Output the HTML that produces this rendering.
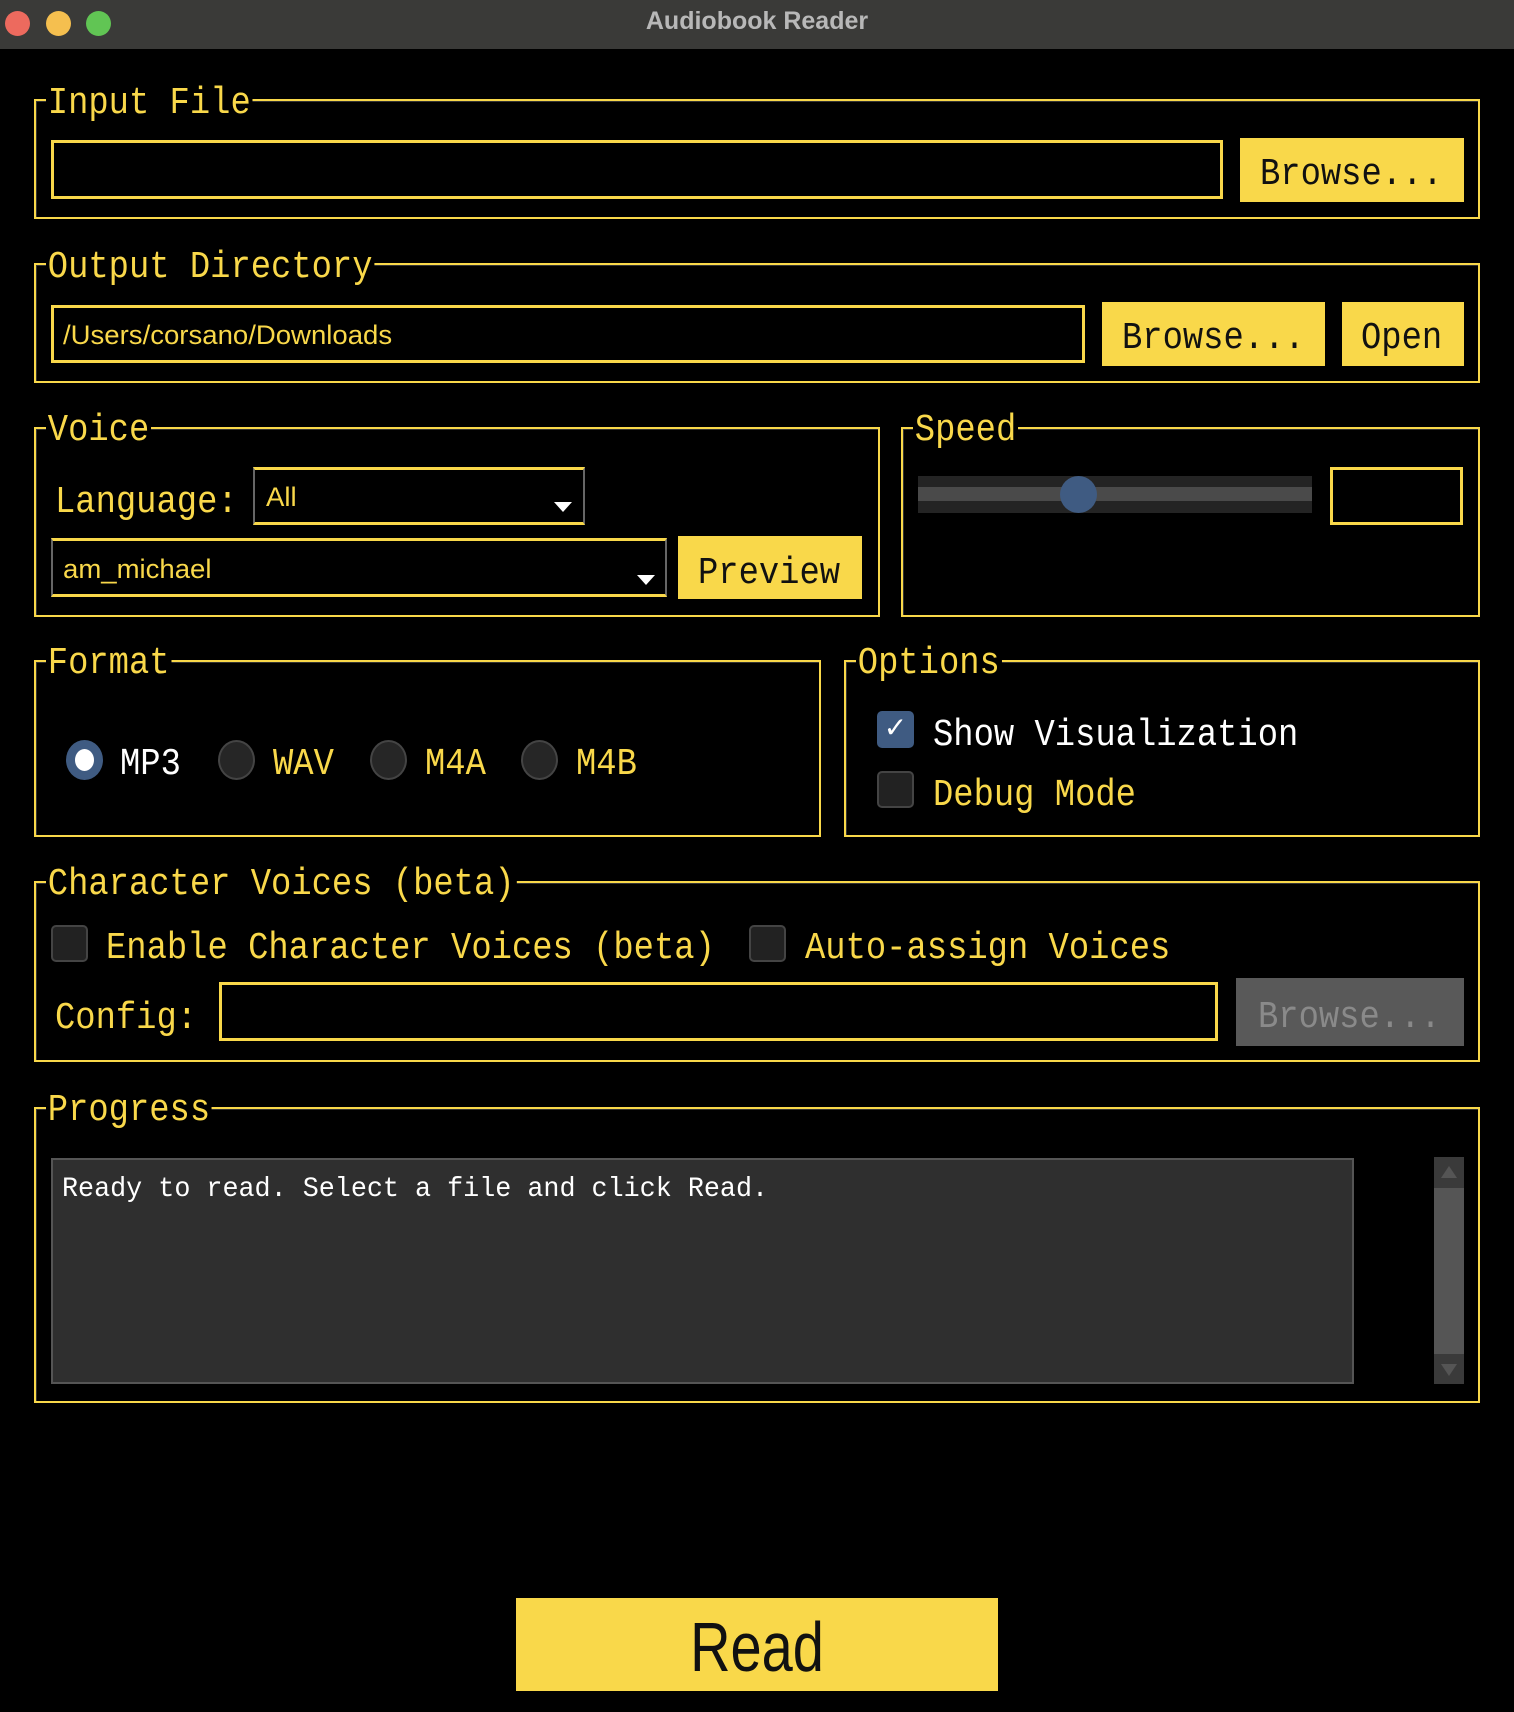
<!DOCTYPE html>
<html><head><meta charset="utf-8"><style>
*{margin:0;padding:0;box-sizing:border-box}
body{width:1514px;height:1712px;background:#000;position:relative;overflow:hidden;font-family:"Liberation Mono",monospace;color:#f9d84a}
.a{position:absolute}
.t{position:absolute;font-size:38px;line-height:38px;white-space:pre;transform:scaleX(.89);transform-origin:left top;margin-top:2px}
.g{position:absolute;border:2px solid #f9d84a;box-shadow:inset 1px 1px 0 #333}
.lg{position:absolute;background:#000;padding:0 2px}
.f{position:absolute;border:3px solid #f9d84a}
.b{position:absolute;background:#f9d84a}
.bt{color:#111}
.s{position:absolute;font-family:"Liberation Sans",sans-serif;font-size:27px;line-height:27px;transform:scaleX(1.02);transform-origin:left top;color:#f9d84a}
.rad{position:absolute;width:37px;height:40px;border-radius:50%;background:#262626;border:2px solid #444}
.cb{position:absolute;width:37px;height:37px;border-radius:5px;background:#222;border:2px solid #444}
.cmb{position:absolute;border-top:3px solid #f9d84a;border-bottom:3px solid #f9d84a;border-left:2px solid #666;border-right:2px solid #666}
.arr{position:absolute;width:0;height:0;border-left:9px solid transparent;border-right:9px solid transparent;border-top:10px solid #fff}
</style></head><body>
<div class="a" style="left:0;top:0;width:1514px;height:49px;background:#3a3a38"></div>
<div class="a" style="left:5px;top:11px;width:25px;height:25px;border-radius:50%;background:#ed6a5e"></div>
<div class="a" style="left:46px;top:11px;width:25px;height:25px;border-radius:50%;background:#f5bf4f"></div>
<div class="a" style="left:86px;top:11px;width:25px;height:25px;border-radius:50%;background:#61c554"></div>
<div class="a" style="left:0;width:1514px;top:7px;text-align:center;font-family:'Liberation Sans',sans-serif;font-weight:bold;font-size:25px;color:#b8b8b8">Audiobook Reader</div>

<div class="g" style="left:34px;top:99px;width:1446px;height:120px"></div>
<div class="lg t" style="left:46px;top:83px">Input File</div>
<div class="f" style="left:51px;top:140px;width:1172px;height:59px"></div>
<div class="b" style="left:1240px;top:138px;width:224px;height:64px"></div>
<div class="t bt" style="left:1260px;top:154px">Browse...</div>

<div class="g" style="left:34px;top:263px;width:1446px;height:120px"></div>
<div class="lg t" style="left:46px;top:247px">Output Directory</div>
<div class="f" style="left:51px;top:305px;width:1034px;height:58px"></div>
<div class="s" style="left:63px;top:322px">/Users/corsano/Downloads</div>
<div class="b" style="left:1102px;top:302px;width:223px;height:64px"></div>
<div class="t bt" style="left:1122px;top:318px">Browse...</div>
<div class="b" style="left:1342px;top:302px;width:122px;height:64px"></div>
<div class="t bt" style="left:1361px;top:318px">Open</div>

<div class="g" style="left:34px;top:427px;width:846px;height:190px"></div>
<div class="lg t" style="left:46px;top:410px">Voice</div>
<div class="t" style="left:55px;top:482px">Language:</div>
<div class="cmb" style="left:253px;top:467px;width:332px;height:58px"></div>
<div class="s" style="left:266px;top:484px">All</div>
<div class="arr" style="left:554px;top:502px"></div>
<div class="cmb" style="left:51px;top:538px;width:616px;height:59px"></div>
<div class="s" style="left:63px;top:556px">am_michael</div>
<div class="arr" style="left:637px;top:575px"></div>
<div class="b" style="left:678px;top:536px;width:184px;height:63px"></div>
<div class="t bt" style="left:698px;top:553px">Preview</div>

<div class="g" style="left:901px;top:427px;width:579px;height:190px"></div>
<div class="lg t" style="left:913px;top:410px">Speed</div>
<div class="a" style="left:918px;top:476px;width:394px;height:37px;background:#242424"></div>
<div class="a" style="left:918px;top:487px;width:394px;height:14px;background:#4a4a4a"></div>
<div class="a" style="left:1060px;top:476px;width:37px;height:37px;border-radius:50%;background:#3f5b82"></div>
<div class="f" style="left:1330px;top:467px;width:133px;height:58px"></div>

<div class="g" style="left:34px;top:660px;width:787px;height:177px"></div>
<div class="lg t" style="left:46px;top:643px">Format</div>
<div class="rad" style="left:66px;top:740px;background:#fff;border:9px solid #3f5b82"></div>
<div class="t" style="left:120px;top:744px;color:#fff">MP3</div>
<div class="rad" style="left:218px;top:740px"></div>
<div class="t" style="left:273px;top:744px">WAV</div>
<div class="rad" style="left:370px;top:740px"></div>
<div class="t" style="left:425px;top:744px">M4A</div>
<div class="rad" style="left:521px;top:740px"></div>
<div class="t" style="left:576px;top:744px">M4B</div>

<div class="g" style="left:844px;top:660px;width:636px;height:177px"></div>
<div class="lg t" style="left:856px;top:643px">Options</div>
<div class="cb" style="left:877px;top:711px;background:#3f5b82;border-color:#3f5b82;color:#fff;font-family:'DejaVu Sans',sans-serif;font-size:28px;line-height:30px;text-align:center">✓</div>
<div class="t" style="left:933px;top:715px;color:#fff">Show Visualization</div>
<div class="cb" style="left:877px;top:771px"></div>
<div class="t" style="left:933px;top:775px">Debug Mode</div>

<div class="g" style="left:34px;top:881px;width:1446px;height:181px"></div>
<div class="lg t" style="left:46px;top:864px">Character Voices (beta)</div>
<div class="cb" style="left:51px;top:925px"></div>
<div class="t" style="left:106px;top:928px">Enable Character Voices (beta)</div>
<div class="cb" style="left:749px;top:925px"></div>
<div class="t" style="left:805px;top:928px">Auto-assign Voices</div>
<div class="t" style="left:55px;top:998px">Config:</div>
<div class="f" style="left:219px;top:982px;width:999px;height:59px"></div>
<div class="a" style="left:1236px;top:978px;width:228px;height:68px;background:#595959"></div>
<div class="t" style="left:1258px;top:997px;color:#8a8a8a">Browse...</div>

<div class="g" style="left:34px;top:1107px;width:1446px;height:296px"></div>
<div class="lg t" style="left:46px;top:1090px">Progress</div>
<div class="a" style="left:51px;top:1158px;width:1303px;height:226px;background:#2f2f2f;border:2px solid #555"></div>
<div class="a" style="left:62px;top:1175px;font-size:28px;line-height:30px;color:#fff;white-space:pre;transform:scaleX(.955);transform-origin:left top">Ready to read. Select a file and click Read.</div>
<div class="a" style="left:1434px;top:1157px;width:30px;height:227px;background:#3a3a3a"></div>
<div class="a" style="left:1434px;top:1188px;width:30px;height:166px;background:#555"></div>
<div class="a" style="left:1441px;top:1166px;border-left:8px solid transparent;border-right:8px solid transparent;border-bottom:12px solid #555"></div>
<div class="a" style="left:1441px;top:1364px;border-left:8px solid transparent;border-right:8px solid transparent;border-top:12px solid #555"></div>

<div class="b" style="left:516px;top:1598px;width:482px;height:93px"></div>
<div class="a" style="left:516px;width:482px;top:1609px;text-align:center;font-size:70px;line-height:76px;color:#111;font-family:'Liberation Sans',sans-serif;transform:scaleX(.8)">Read</div>
</body></html>
